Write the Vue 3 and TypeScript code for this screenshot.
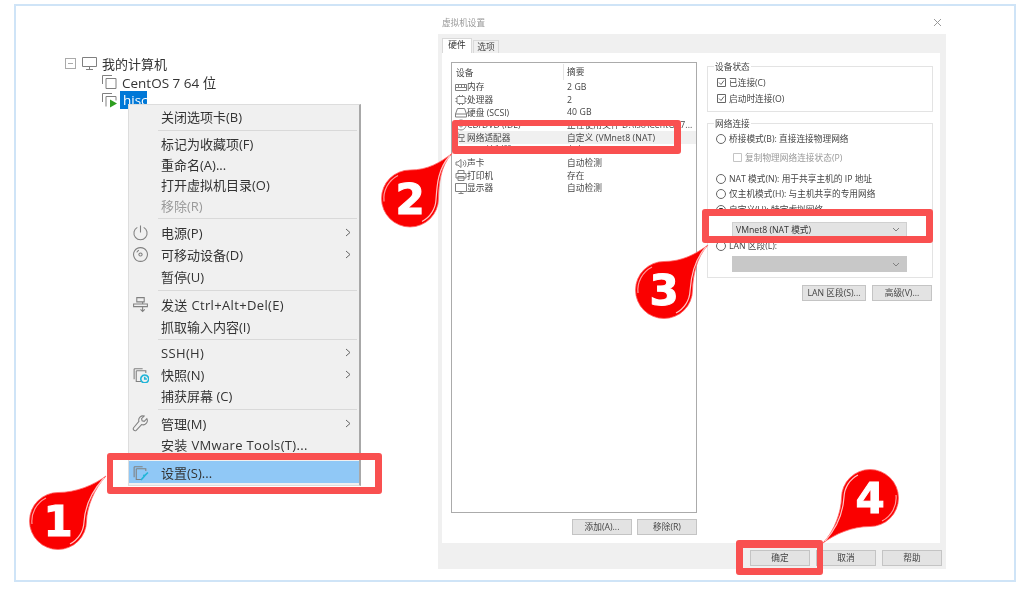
<script setup lang="ts">
interface MenuItem {
  label?: string
  sep?: string
  size?: string
  icon?: string
  accent?: string
  arrow?: boolean
  off?: boolean
  active?: boolean
  latin?: boolean
}

const squares = 'M2 2.5h8M2 2.5v10M4 4.5h9v2M4 4.5v10h5'

const menu: MenuItem[] = [
  { label: '关闭选项卡(B)', size: 'r21' },
  { sep: 'normal' },
  { label: '标记为收藏项(F)' },
  { label: '重命名(A)...' },
  { label: '打开虚拟机目录(O)' },
  { label: '移除(R)', off: true },
  { sep: 'normal' },
  { label: '电源(P)', size: 'r22', arrow: true, icon: 'M5 3.2A6.2 6.2 0 1 0 11 3.2M8 1.5V8' },
  { label: '可移动设备(D)', size: 'r22', arrow: true, icon: 'M8 1.5a6.5 6.5 0 1 0 .01 0ZM8 6.5a1.5 1.5 0 1 0 .01 0ZM4.5 6a4 4 0 0 1 2-2' },
  { label: '暂停(U)', size: 'r22' },
  { sep: 'normal' },
  { label: '发送 Ctrl+Alt+Del(E)', size: 'r22', latin: true, icon: 'M4.5 1.5h7v4h-7zM1.5 7.5h13v2.5h-13zM10 5.5v2M10 10v4.5M8 12.5l2 2 2-2' },
  { label: '抓取输入内容(I)', size: 'r22' },
  { sep: 'short' },
  { label: 'SSH(H)', size: 'r21h', arrow: true, latin: true },
  { label: '快照(N)', size: 'r21h', arrow: true, icon: squares, accent: 'M12 8.5a3.7 3.7 0 1 0 .01 0ZM12 10v2.3h2' },
  { label: '捕获屏幕 (C)', size: 'r21h' },
  { sep: 'long' },
  { label: '管理(M)', size: 'r21', arrow: true, icon: 'M14 3.5l-2.5 2.5-2-.5-.5-2 2.5-2.5a4 4 0 0 0-5 5L1.5 12a1.8 1.8 0 0 0 2.5 2.5l5-5.5a4 4 0 0 0 5-5.5z' },
  { label: '安装 VMware Tools(T)...', size: 'r21', latin: true },
  { sep: 'normal' },
  { label: '设置(S)...', size: 'r22', active: true, icon: squares, accent: 'M15 8l-3 3-1.5-.5M12 11l-3.5 4' },
]

interface Device { name: string; value: string; icon: string; selected?: boolean }
const devices: Device[] = [
  { name: '内存', value: '2 GB', icon: 'M.5 3.5h11v6H.5zM.5 6.5h11M3.5 3.5v3M6.5 3.5v3M9.5 3.5v3' },
  { name: '处理器', value: '2', icon: 'M3 2.5h6a1 1 0 0 1 1 1v5a1 1 0 0 1-1 1H3a1 1 0 0 1-1-1v-5a1 1 0 0 1 1-1zM.5 4.5H2M.5 7.5H2M10 4.5h1.5M10 7.5h1.5M4.5 1v1.5M7.5 1v1.5M4.5 9.5V11M7.5 9.5V11' },
  { name: '硬盘 (SCSI)', value: '40 GB', icon: 'M2.5 2.5h7l2 5.5v3H.5V8zM.5 8h11' },
  { name: 'CD/DVD (IDE)', value: '正在使用文件 D:\\iso\\CentOS7...', icon: 'M6 1a5 5 0 1 0 .01 0ZM6 5a1.5 1.5 0 1 0 .01 0Z' },
  { name: '网络适配器', value: '自定义 (VMnet8 (NAT)', icon: 'M1 6.5h3M4 3.5h5v3H4zM7 6.5v4M4 10.5h6M3 1.5v2', selected: true },
  { name: 'USB 控制器', value: '存在', icon: 'M.5 3h11v6H.5z' },
  { name: '声卡', value: '自动检测', icon: 'M1 5h2l3-2.5v8l-3-2.5H1zM8 4.5a3 3 0 0 1 0 4M9.5 3a5 5 0 0 1 0 7' },
  { name: '打印机', value: '存在', icon: 'M3 4.5v-3h6v3M1 4.5h10v4.5H1zM3 7.5h6v4H3z' },
  { name: '显示器', value: '自动检测', icon: 'M.5 1.5h11v8H.5zM3.5 11.5h5M6 9.5v2' },
]

interface Pin { n: string; x: number; y: number; flip: boolean; tip: number }
const pins: Pin[] = [
  { n: '1', x: 58, y: 521, flip: false, tip: 48 },
  { n: '2', x: 410, y: 198.5, flip: false, tip: 42 },
  { n: '3', x: 664, y: 290, flip: false, tip: 44 },
  { n: '4', x: 870, y: 498, flip: true, tip: 47 },
]
function dropPath(tip: number): string {
  return `M0 -28.5C18 -28.5 ${tip - 12} -36 ${tip} -45C${tip - 12} -32 29 -14 28.5 0A28.5 28.5 0 1 1 0 -28.5Z`
}
function glowPath(tip: number): string {
  return `M${tip - 2} -43C${tip - 14} -30 27 -14 26 1A26 26 0 0 1 12 23`
}
</script>

<template>
  <div class="page">
    <div class="frame"></div>

    <section class="tree">
      <div class="tree-row">
        <span class="minus"></span>
        <svg class="tree-icon" width="17" height="15" viewBox="0 0 17 15"><path d="M1.5 1.5h14v9h-14zM5 13.5h7M8.5 10.5v3" /></svg>
        <span>我的计算机</span>
      </div>
      <div class="tree-row nested">
        <svg class="tree-icon" width="17" height="16" viewBox="0 0 17 16"><path d="M1.5 10V1.5H11M5 4.5h10v10H5z" /></svg>
        <span class="vm">CentOS 7 64 位</span>
      </div>
      <div class="tree-row nested">
        <svg class="tree-icon" width="17" height="16" viewBox="0 0 17 16"><path d="M1.5 10V1.5H11M5 14.5V4.5h10v4" /><path class="play" d="M9 7.5l7 4-7 4z" /></svg>
        <span class="vm picked">hisc</span>
      </div>
    </section>

    <nav class="menu">
      <template v-for="(m, i) in menu" :key="i">
        <div v-if="m.sep" class="sep" :class="m.sep"></div>
        <div v-else class="item" :class="[m.size, { off: m.off, active: m.active, latin: m.latin }]">
          <span class="item-icon">
            <svg v-if="m.icon" width="17" height="17" viewBox="0 0 16 16">
              <path :d="m.icon" />
              <path v-if="m.accent" class="accent" :d="m.accent" />
            </svg>
          </span>
          <span class="item-label">{{ m.label }}</span>
          <svg v-if="m.arrow" class="chev" width="6" height="9" viewBox="0 0 6 9"><path d="M1 1l4 3.5L1 8" /></svg>
        </div>
      </template>
    </nav>

    <div class="dlg-title">
      <span>虚拟机设置</span>
      <svg width="9" height="9" viewBox="0 0 9 9"><path d="M1 1l7 7M8 1L1 8" /></svg>
    </div>
    <section class="dialog">
      <div class="tabs">
        <span class="tab on">硬件</span>
        <span class="tab">选项</span>
      </div>
      <div class="pane">
        <div class="left">
          <div class="list">
            <div class="list-head">
              <span class="c1">设备</span>
              <span class="c2">摘要</span>
            </div>
            <div v-for="d in devices" :key="d.name" class="dev" :class="{ sel: d.selected }">
              <span class="c1">
                <svg width="12" height="12" viewBox="0 0 12 12"><path :d="d.icon" /></svg>
                {{ d.name }}
              </span>
              <span class="c2">{{ d.value }}</span>
            </div>
          </div>
          <div class="btns">
            <span class="btn">添加(A)...</span>
            <span class="btn">移除(R)</span>
          </div>
        </div>
        <div class="right">
          <div class="group g1">
            <div class="legend">设备状态</div>
            <label class="opt"><svg class="chk" width="9" height="9" viewBox="0 0 9 9"><path d="M.5.5h8v8h-8zM2 4.5l2 2 3-4" /></svg>已连接(C)</label>
            <label class="opt"><svg class="chk" width="9" height="9" viewBox="0 0 9 9"><path d="M.5.5h8v8h-8zM2 4.5l2 2 3-4" /></svg>启动时连接(O)</label>
          </div>
          <div class="group g2">
            <div class="legend">网络连接</div>
            <label class="opt"><i class="rad"></i>桥接模式(B): 直接连接物理网络</label>
            <label class="opt sub"><svg class="chk blank" width="9" height="9" viewBox="0 0 9 9"><path d="M.5.5h8v8h-8z" /></svg>复制物理网络连接状态(P)</label>
            <label class="opt gap"><i class="rad"></i>NAT 模式(N): 用于共享主机的 IP 地址</label>
            <label class="opt"><i class="rad"></i>仅主机模式(H): 与主机共享的专用网络</label>
            <label class="opt custom"><i class="rad dot"></i>自定义(U): 特定虚拟网络</label>
            <div class="select">VMnet8 (NAT 模式)<svg width="8" height="5" viewBox="0 0 8 5"><path d="M1 1l3 3 3-3" /></svg></div>
            <label class="opt"><i class="rad"></i>LAN 区段(L):</label>
            <div class="select dim"><svg width="8" height="5" viewBox="0 0 8 5"><path d="M1 1l3 3 3-3" /></svg></div>
          </div>
          <div class="btns tight">
            <span class="btn lan">LAN 区段(S)...</span>
            <span class="btn">高级(V)...</span>
          </div>
        </div>
      </div>
      <div class="foot">
        <span class="btn">确定</span>
        <span class="btn">取消</span>
        <span class="btn">帮助</span>
      </div>
    </section>

    <div class="mark m1"></div>
    <div class="mark m2"></div>
    <div class="mark m3"></div>
    <div class="mark m4"></div>

    <svg class="pins" width="1024" height="595" viewBox="0 0 1024 595">
      <g v-for="p in pins" :key="p.n" :transform="`translate(${p.x} ${p.y})`">
        <g :transform="p.flip ? 'scale(-1 -1)' : undefined">
          <path class="drop" :d="dropPath(p.tip)" />
          <path class="glow" :d="glowPath(p.tip)" />
          <path class="glow soft" d="M-26 3A26 26 0 0 1 -12 -23" />
        </g>
        <text class="num" y="15" text-anchor="middle">{{ p.n }}</text>
      </g>
    </svg>
  </div>
</template>

<style>
html, body { margin: 0; background: #fff; }
</style>

<style scoped>
.page {
  position: relative;
  width: 1024px;
  height: 595px;
  overflow: hidden;
  background: #fff;
  color: #333;
  font-family: "Open Sans", "Noto Sans CJK SC", sans-serif;
  filter: blur(0.5px);
}
svg { display: block; flex: none; }
path { fill: none; stroke: #808080; stroke-width: 1; }

.frame {
  box-sizing: border-box;
  width: 1002px;
  height: 578px;
  margin: 4px 0 0 14px;
  border: 2px solid #cfe4f7;
}

/* tree */
.tree {
  position: absolute;
  left: 65px;
  top: 54px;
  font-size: 13px;
  display: flex;
  flex-direction: column;
}
.tree-row { display: flex; align-items: center; height: 18.5px; gap: 4px; }
.minus {
  width: 9px;
  height: 9px;
  margin-right: 1px;
  border: 1px solid #aaa;
  background: linear-gradient(#aaa, #aaa) center / 5px 1px no-repeat;
}
.nested { margin-left: 36px; }
.vm { font-size: 13.5px; }
.picked { background: #0078d7; color: #fff; line-height: 18px; padding: 0 3px; margin-left: -2px; width: 21px; }
.play { fill: #2e9e1f; stroke: none; }

/* context menu */
.menu {
  position: absolute;
  left: 128px;
  top: 104px;
  box-sizing: border-box;
  width: 233px;
  height: 382px;
  padding-top: 1px;
  background: #f0f0f0;
  border-top: 1px solid #ddd;
  border-left: 1px solid #ddd;
  border-right: 2px solid #a8a8a8;
  border-bottom: 1px solid #ddd;
  font-size: 13px;
}
.item { display: flex; align-items: center; height: 20.7px; padding: 0 8px 0 2px; }
.r21 { height: 21px; }
.r21h { height: 21.5px; }
.r22 { height: 22px; }
.item-icon { width: 18px; margin-right: 12px; display: flex; justify-content: center; }
.item-label { flex: 1; white-space: nowrap; }
.latin .item-label { letter-spacing: 0.35px; }
.off { color: #9a9a9a; }
.active { background: #90c8f6; }
.chev path { stroke: #666; }
.sep { height: 6px; margin: 0 2px 0 29px; background: linear-gradient(#d9d9d9, #d9d9d9) center / 100% 1px no-repeat; }
.sep.short { height: 4px; }
.sep.long { height: 7px; }
.accent { stroke: #22b5d8; stroke-width: 1.5; }

/* dialog */
.dlg-title {
  position: absolute;
  left: 442px;
  top: 15px;
  width: 500px;
  display: flex;
  justify-content: space-between;
  align-items: center;
  font-size: 8.6px;
  color: #9a9a9a;
  height: 15px;
}
.dlg-title svg path { stroke: #999; }
.dialog {
  position: absolute;
  left: 438px;
  top: 34px;
  box-sizing: border-box;
  width: 508px;
  height: 535px;
  padding: 5px 6px 0 4px;
  background: #f0f0f0;
  font-size: 8.7px;
  color: #444;
  display: flex;
  flex-direction: column;
}
.tabs { display: flex; align-items: flex-end; height: 14px; }
.tab {
  box-sizing: border-box;
  width: 26px;
  height: 13px;
  line-height: 12px;
  text-align: center;
  border: 1px solid #d9d9d9;
  border-bottom: 0;
}
.tab.on { width: 30px; height: 15px; background: #fff; margin-right: 1px; color: #333; }
.pane {
  height: 490px;
  box-sizing: border-box;
  padding: 9px 8px 0 9px;
  background: #fff;
  display: flex;
  gap: 10px;
}
.left { width: 246px; flex: none; }
.list {
  box-sizing: border-box;
  height: 451px;
  border: 1px solid #ababab;
  padding-top: 1px;
}
.list-head, .dev { display: flex; align-items: center; white-space: nowrap; overflow: hidden; }
.list-head { height: 16.7px; }
.list-head .c1 { padding-left: 4px; width: 107px; }
.list-head .c2 { border-left: 1px solid #e5e5e5; padding-left: 3px; height: 16px; line-height: 16px; }
.c1 { width: 111px; display: flex; align-items: center; gap: 0; }
.c2 { padding-left: 1px; letter-spacing: 0.1px; }
.dev { height: 12.6px; padding-left: 3px; }
.dev .c1 { width: 111px; }
.sel { background: #f0f0f0; }
.btns { display: flex; justify-content: flex-end; gap: 5px; margin-top: 6px; }
.btn {
  box-sizing: border-box;
  width: 60px;
  height: 16px;
  line-height: 14px;
  text-align: center;
  background: #e3e3e3;
  border: 1px solid #c4c4c4;
  white-space: nowrap;
}
.right { width: 226px; flex: none; padding-top: 4px; }
.group {
  box-sizing: border-box;
  border: 1px solid #e3e3e3;
  padding: 0 6px 0 9px;
  display: flex;
  flex-direction: column;
}
.g1 { height: 46px; }
.g2 { height: 155px; margin-top: 11px; }
.legend { margin: -7px 0 0 -3px; width: fit-content; background: #fff; height: 14px; line-height: 14px; padding: 0 1px; }
.opt { display: flex; align-items: center; height: 15px; gap: 3px; white-space: nowrap; }
.g1 .opt { height: 16px; }
.sub { margin: 4px 0 0 16px; color: #999; }
.opt.gap { margin-top: 6px; }
.opt.custom { margin-top: 1px; }
.chk path { stroke: #666; }
.chk.blank path { stroke: #c4c4c4; }
.rad {
  box-sizing: border-box;
  width: 10px;
  height: 10px;
  margin-left: -1px;
  border: 1px solid #666;
  border-radius: 50%;
}
.rad.dot { background: radial-gradient(circle, #333 0 2px, #fff 2.5px); }
.select {
  box-sizing: border-box;
  width: 175px;
  height: 15px;
  margin: 5px 0 1px 15px;
  padding: 0 6px 0 3px;
  background: #e3e3e3;
  border: 1px solid #d0d0d0;
  display: flex;
  align-items: center;
  justify-content: space-between;
  color: #333;
}
.select.dim { background: #c8c8c8; border-color: #c8c8c8; height: 16px; margin-top: 3px; justify-content: flex-end; }
.tight { margin-top: 7px; padding-right: 1px; gap: 6px; }
.lan { width: 64px; }
.foot { display: flex; justify-content: flex-end; gap: 6px; margin: 6.5px -2px 0 0; }

/* overlay highlights */
.mark {
  position: absolute;
  box-sizing: border-box;
  border-style: solid;
  border-color: #f95050;
  border-radius: 3px;
}
.m1 { left: 107px; top: 453px; width: 275px; height: 41px; border-width: 7px 7px 7px 6px; }
.m2 { left: 452px; top: 120px; width: 229px; height: 34px; border-width: 6px 7px 8px 6px; }
.m3 { left: 702px; top: 209px; width: 231px; height: 34px; border-width: 7px; }
.m4 { left: 736px; top: 540px; width: 87px; height: 35px; border-width: 8px 6px 7px 7px; }
.pins { position: absolute; left: 0; top: 0; }
.drop { fill: #fa0000; stroke: #ff6a6a; stroke-width: 0.8; }
.glow { stroke: #ffc4c4; stroke-width: 1.2; }
.glow.soft { stroke: #ff9a9a; }
.num {
  font-family: "DejaVu Sans", sans-serif;
  font-weight: 700;
  font-size: 42px;
  fill: #fff;
  stroke: #fff;
  stroke-width: 1px;
}
</style>
